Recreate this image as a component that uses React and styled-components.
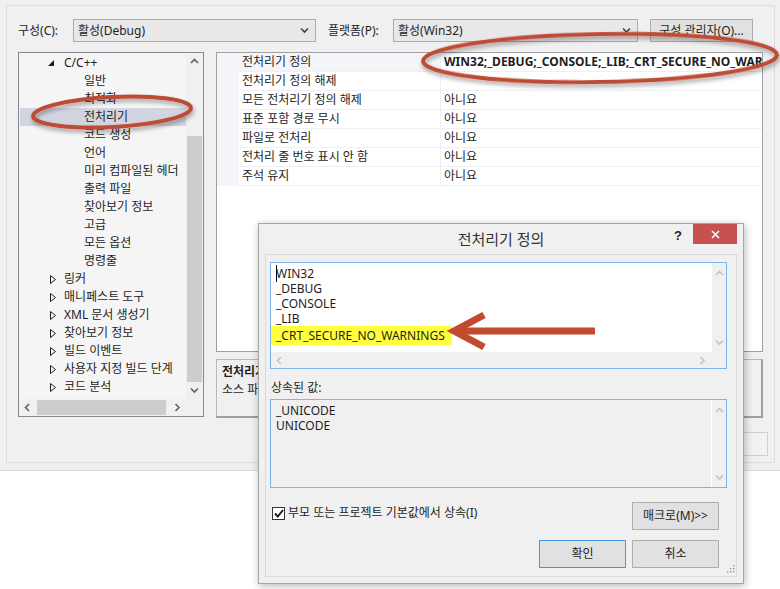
import React from 'react';
import styled, { createGlobalStyle } from 'styled-components';

const font = `"Noto Sans", "Noto Sans CJK KR", sans-serif`;

const GlobalStyle = createGlobalStyle`
  html, body {
    margin: 0;
    padding: 0;
    background: #ffffff;
  }
  body {
    font-family: ${font};
    font-size: 12px;
    color: #1e1e1e;
  }
  * {
    box-sizing: border-box;
  }
`;

const Screen = styled.div`
  position: relative;
  width: 780px;
  height: 589px;
  overflow: hidden;
  background: #ffffff;
`;

const MainWindow = styled.div`
  height: 471px;
  background: #f0f0f0;
  border-bottom: 1px solid #dcdcdc;
  padding: 5px 5px 0 6px;
`;

const Panel = styled.div`
  height: 458px;
  border: 1px solid #dcdcdc;
  padding: 13px 6px 0 11px;
  display: flex;
  flex-direction: column;
`;

const TopBar = styled.div`
  display: flex;
  align-items: center;
  height: 23px;
`;

const FieldLabel = styled.div`
  width: ${p => p.w}px;
  line-height: 16px;
  white-space: nowrap;
`;

const Combo = styled.div`
  width: ${p => p.w}px;
  height: 23px;
  margin-right: 12px;
  border: 1px solid #acacac;
  background: #e8e8e8;
  display: flex;
  align-items: center;
  justify-content: space-between;
  padding: 0 6px 0 4px;
  line-height: 16px;
`;

const Button = styled.div`
  width: ${p => p.w}px;
  height: ${p => p.h || 23}px;
  border: 1px solid ${p => (p.primary ? '#3c9ae8' : p.disabled ? '#d0d0d0' : '#adadad')};
  background: ${p => (p.disabled ? '#f2f2f2' : '#e1e1e1')};
  color: ${p => (p.disabled ? '#a0a0a0' : 'inherit')};
  display: flex;
  align-items: center;
  justify-content: center;
  line-height: 16px;
  white-space: nowrap;
`;

const Body = styled.div`
  display: flex;
  margin-top: 10px;
  height: 366px;
`;

const Tree = styled.div`
  width: 186px;
  height: 365px;
  border: 1px solid #828790;
  background: #f5f5f5;
  display: grid;
  grid-template-columns: 1fr 17px;
  grid-template-rows: 1fr 17px;
`;

const TreeList = styled.div`
  overflow: hidden;
  padding-top: 1px;
`;

const TreeRow = styled.div`
  height: 18px;
  display: flex;
  align-items: center;
  padding-left: ${p => (p.level === 2 ? 64 : 44)}px;
  position: relative;
  white-space: nowrap;
  background: ${p => (p.selected ? '#d2d4e0' : 'transparent')};
  margin-left: 1px;
  line-height: 16px;
`;

const Expander = styled.span`
  position: absolute;
  left: ${p => (p.open ? 28 : 30)}px;
  top: ${p => (p.open ? 6 : 5)}px;
  display: flex;
`;

const VScroll = styled.div`
  display: flex;
  flex-direction: column;
  background: ${p => p.bg || '#f0f0f0'};
  border-left: ${p => (p.split ? '1px solid #ffffff' : 'none')};
`;

const HScroll = styled.div`
  display: flex;
  align-items: stretch;
  background: ${p => p.bg || '#f0f0f0'};
`;

const ArrowCell = styled.div`
  flex: 0 0 ${p => p.size || 17}px;
  display: flex;
  align-items: center;
  justify-content: center;
`;

const Track = styled.div`
  flex: 1;
  display: flex;
  flex-direction: ${p => (p.horizontal ? 'row' : 'column')};
`;

const Thumb = styled.div`
  background: #cdcdcd;
  ${p =>
    p.horizontal
      ? `margin: 1px 0 1px ${p.start}px; width: ${p.len}px;`
      : `margin: ${p.start}px 1px 0 1px; flex: 1;`}
`;

const Corner = styled.div`
  background: #f0f0f0;
`;

const RightCol = styled.div`
  margin-left: 12px;
  width: 547px;
  display: flex;
  flex-direction: column;
`;

const PropGrid = styled.div`
  height: 300px;
  border: 1px solid #a0a0a0;
  background: #ffffff;
`;

const PropRow = styled.div`
  display: grid;
  grid-template-columns: 22px 202px 1fr;
  height: 19px;
`;

const Gutter = styled.div`
  background: #f3f5f9;
`;

const PropName = styled.div`
  padding-left: 3px;
  display: flex;
  align-items: center;
  border-bottom: 1px solid #eef0f4;
  border-right: 1px solid #eef0f4;
  background: ${p => (p.active ? '#f3f5f9' : '#ffffff')};
  white-space: nowrap;
  line-height: 16px;
`;

const PropValue = styled.div`
  padding-left: 3px;
  display: flex;
  align-items: center;
  border-bottom: 1px solid #eef0f4;
  white-space: nowrap;
  overflow: hidden;
  font-weight: ${p => (p.bold ? 700 : 400)};
  line-height: 16px;
`;

const DescBox = styled.div`
  margin-top: 7px;
  height: 59px;
  border: 1px solid #b9b9b9;
  border-right: 2px solid #a0a0a0;
  border-bottom: 2px solid #a0a0a0;
  padding: 3px 5px;
  line-height: 18px;
`;

const DescTitle = styled.div`
  font-weight: 700;
`;

const BottomButtons = styled.div`
  display: flex;
  justify-content: flex-end;
  gap: 7px;
  margin-top: 14px;
`;

/* dialog */

const Dialog = styled.div`
  position: absolute;
  left: 258px;
  top: 223px;
  width: 486px;
  height: 361px;
  background: #f0f0f0;
  border: 1px solid #a6a6a6;
  box-shadow: 1px 2px 8px rgba(0, 0, 0, 0.28);
  display: flex;
  flex-direction: column;
  padding: 0 6px 6px 6px;
`;

const TitleBar = styled.div`
  height: 30px;
  display: grid;
  grid-template-columns: 80px 1fr 80px;
`;

const TitleText = styled.div`
  font-size: 15px;
  line-height: 20px;
  padding-top: 5px;
  text-align: center;
  color: #333333;
  white-space: nowrap;
`;

const TitleControls = styled.div`
  display: flex;
  justify-content: flex-end;
  align-items: flex-start;
`;

const HelpMark = styled.div`
  font-family: "Liberation Sans", sans-serif;
  font-weight: 700;
  font-size: 13px;
  line-height: 16px;
  margin: 4px 11px 0 0;
  color: #222;
`;

const CloseBtn = styled.div`
  width: 44px;
  height: 20px;
  background: #c75050;
  color: #ffffff;
  display: flex;
  align-items: center;
  justify-content: center;
`;

const Client = styled.div`
  position: relative;
  flex: 1;
  border: 1px solid #dadada;
  padding: 7px 9px 0 4px;
  display: flex;
  flex-direction: column;
`;

const EditBox = styled.div`
  height: ${p => p.h}px;
  margin-top: ${p => p.mt || 0}px;
  border: 1px solid #7eb4ea;
  background: ${p => p.bg};
  display: grid;
  grid-template-columns: 1fr 15px;
  grid-template-rows: ${p => (p.hscroll ? '1fr 16px' : '1fr')};
`;

const EditText = styled.div`
  padding: 3px 0 0 5px;
  line-height: 15px;
  overflow: hidden;
`;

const Line = styled.div`
  white-space: nowrap;
`;

const Highlight = styled.span`
  display: inline-block;
  background: #ffff40;
  padding: 2px 7px 2px 5px;
  margin-left: -5px;
`;

const Caret = styled.span`
  border-left: 1px solid #000;
  margin-right: -1px;
`;

const SectionLabel = styled.div`
  margin-top: 11px;
  height: 16px;
  line-height: 16px;
  padding-left: 1px;
`;

const BottomArea = styled.div`
  display: flex;
  flex-direction: column;
  align-items: stretch;
  padding-right: 8px;
`;

const OptionRow = styled.div`
  display: flex;
  justify-content: space-between;
  align-items: center;
  margin-top: 14px;
`;

const CheckRow = styled.label`
  display: flex;
  align-items: center;
  gap: 3px;
  padding-left: 2px;
  margin-top: -6px;
  line-height: 16px;
`;

const CheckBox = styled.span`
  width: 13px;
  height: 13px;
  border: 1px solid #333333;
  background: #ffffff;
  display: flex;
  align-items: center;
  justify-content: center;
`;

const DialogButtons = styled.div`
  display: flex;
  justify-content: flex-end;
  gap: 6px;
  margin-top: 10px;
`;

const Grip = styled.svg`
  position: absolute;
  right: 1px;
  bottom: 1px;
`;

const Annotations = styled.svg`
  position: absolute;
  left: 0;
  top: 0;
  pointer-events: none;
`;

const Chevron = ({ dir = 'down', color = '#606060' }) => {
  const paths = {
    up: 'M1 5 L4.5 1.5 L8 5',
    down: 'M1 1.5 L4.5 5 L8 1.5',
    left: 'M5 1 L1.5 4.5 L5 8',
    right: 'M1.5 1 L5 4.5 L1.5 8',
  };
  const horiz = dir === 'left' || dir === 'right';
  return (
    <svg width={horiz ? 7 : 9} height={horiz ? 9 : 7} viewBox={horiz ? '0 0 7 9' : '0 0 9 7'}>
      <path d={paths[dir]} fill="none" stroke={color} strokeWidth="1.6" />
    </svg>
  );
};

const treeItems = [
  { label: 'C/C++', level: 1, open: true },
  { label: '일반', level: 2 },
  { label: '최적화', level: 2 },
  { label: '전처리기', level: 2, selected: true },
  { label: '코드 생성', level: 2 },
  { label: '언어', level: 2 },
  { label: '미리 컴파일된 헤더', level: 2 },
  { label: '출력 파일', level: 2 },
  { label: '찾아보기 정보', level: 2 },
  { label: '고급', level: 2 },
  { label: '모든 옵션', level: 2 },
  { label: '명령줄', level: 2 },
  { label: '링커', level: 1 },
  { label: '매니페스트 도구', level: 1 },
  { label: 'XML 문서 생성기', level: 1 },
  { label: '찾아보기 정보', level: 1 },
  { label: '빌드 이벤트', level: 1 },
  { label: '사용자 지정 빌드 단계', level: 1 },
  { label: '코드 분석', level: 1 },
];

const props = [
  { name: '전처리기 정의', value: 'WIN32;_DEBUG;_CONSOLE;_LIB;_CRT_SECURE_NO_WARNINGS', bold: true },
  { name: '전처리기 정의 해제', value: '' },
  { name: '모든 전처리기 정의 해제', value: '아니요' },
  { name: '표준 포함 경로 무시', value: '아니요' },
  { name: '파일로 전처리', value: '아니요' },
  { name: '전처리 줄 번호 표시 안 함', value: '아니요' },
  { name: '주석 유지', value: '아니요' },
];

const definitions = ['WIN32', '_DEBUG', '_CONSOLE', '_LIB'];

function App() {
  return (
    <Screen>
      <GlobalStyle />
      <MainWindow>
        <Panel>
          <TopBar>
            <FieldLabel w={55}>구성(C):</FieldLabel>
            <Combo w={243}>
              <span>활성(Debug)</span>
              <Chevron dir="down" color="#404040" />
            </Combo>
            <FieldLabel w={65}>플랫폼(P):</FieldLabel>
            <Combo w={245}>
              <span>활성(Win32)</span>
              <Chevron dir="down" color="#404040" />
            </Combo>
            <Button w={103}>구성 관리자(O)...</Button>
          </TopBar>

          <Body>
            <Tree>
              <TreeList>
                {treeItems.map((item, i) => (
                  <TreeRow key={i} level={item.level} selected={item.selected}>
                    {item.level === 1 && (
                      <Expander open={item.open}>
                        {item.open ? (
                          <svg width="6" height="6" viewBox="0 0 6 6">
                            <path d="M6 0 L6 6 L0 6 Z" fill="#1e1e1e" />
                          </svg>
                        ) : (
                          <svg width="6" height="9" viewBox="0 0 6 9">
                            <path d="M0.5 0.5 L5.5 4.5 L0.5 8.5 Z" fill="none" stroke="#1e1e1e" strokeWidth="1" />
                          </svg>
                        )}
                      </Expander>
                    )}
                    {item.label}
                  </TreeRow>
                ))}
              </TreeList>
              <VScroll>
                <ArrowCell>
                  <Chevron dir="up" />
                </ArrowCell>
                <Track>
                  <Thumb start={66} />
                </Track>
                <ArrowCell>
                  <Chevron dir="down" />
                </ArrowCell>
              </VScroll>
              <HScroll>
                <ArrowCell>
                  <Chevron dir="left" />
                </ArrowCell>
                <Track horizontal>
                  <Thumb horizontal start={1} len={129} />
                </Track>
                <ArrowCell>
                  <Chevron dir="right" />
                </ArrowCell>
              </HScroll>
              <Corner />
            </Tree>

            <RightCol>
              <PropGrid>
                {props.map((p, i) => (
                  <PropRow key={i}>
                    <Gutter />
                    <PropName active={i === 0}>{p.name}</PropName>
                    <PropValue bold={p.bold}>{p.value}</PropValue>
                  </PropRow>
                ))}
              </PropGrid>
              <DescBox>
                <DescTitle>전처리기 정의</DescTitle>
                <div>소스 파일의 전처리 기호를 정의합니다.</div>
              </DescBox>
            </RightCol>
          </Body>

          <BottomButtons>
            <Button w={75} h={24}>확인</Button>
            <Button w={75} h={24}>취소</Button>
            <Button w={90} h={24} disabled>적용(A)</Button>
          </BottomButtons>
        </Panel>
      </MainWindow>

      <Dialog>
        <TitleBar>
          <div />
          <TitleText>전처리기 정의</TitleText>
          <TitleControls>
            <HelpMark>?</HelpMark>
            <CloseBtn>
              <svg width="9" height="9" viewBox="0 0 9 9">
                <path d="M1 1 L8 8 M8 1 L1 8" stroke="#ffffff" strokeWidth="1.6" />
              </svg>
            </CloseBtn>
          </TitleControls>
        </TitleBar>

        <Client>
          <EditBox h={107} bg="#ffffff" hscroll>
            <EditText>
              {definitions.map((d, i) => (
                <Line key={d}>
                  {i === 0 && <Caret />}
                  {d}
                </Line>
              ))}
              <Line>
                <Highlight>_CRT_SECURE_NO_WARNINGS</Highlight>
              </Line>
            </EditText>
            <VScroll split>
              <ArrowCell size={20}>
                <Chevron dir="up" color="#c2c2c2" />
              </ArrowCell>
              <Track />
              <ArrowCell size={20}>
                <Chevron dir="down" color="#c2c2c2" />
              </ArrowCell>
            </VScroll>
            <HScroll>
              <ArrowCell>
                <Chevron dir="left" color="#c2c2c2" />
              </ArrowCell>
              <Track horizontal />
              <ArrowCell>
                <Chevron dir="right" color="#c2c2c2" />
              </ArrowCell>
            </HScroll>
            <Corner />
          </EditBox>

          <SectionLabel>상속된 값:</SectionLabel>

          <EditBox h={89} mt={3} bg="#f0f0f0">
            <EditText>
              <Line>_UNICODE</Line>
              <Line>UNICODE</Line>
            </EditText>
            <VScroll split>
              <ArrowCell size={20}>
                <Chevron dir="up" color="#c2c2c2" />
              </ArrowCell>
              <Track />
              <ArrowCell size={20}>
                <Chevron dir="down" color="#c2c2c2" />
              </ArrowCell>
            </VScroll>
          </EditBox>

          <BottomArea>
            <OptionRow>
              <CheckRow>
                <CheckBox>
                  <svg width="10" height="9" viewBox="0 0 10 9">
                    <path d="M1 4.5 L3.8 7.5 L9 1" fill="none" stroke="#1e1e1e" strokeWidth="2" />
                  </svg>
                </CheckBox>
                부모 또는 프로젝트 기본값에서 상속(I)
              </CheckRow>
              <Button w={87} h={28}>매크로(M)&gt;&gt;</Button>
            </OptionRow>
            <DialogButtons>
              <Button w={87} h={28} primary>확인</Button>
              <Button w={87} h={28}>취소</Button>
            </DialogButtons>
          </BottomArea>

          <Grip width="10" height="10" viewBox="0 0 10 10">
            <g fill="#9a9a9a">
              <rect x="8" y="0" width="1.4" height="1.4" />
              <rect x="5" y="3" width="1.4" height="1.4" />
              <rect x="8" y="3" width="1.4" height="1.4" />
              <rect x="2" y="6" width="1.4" height="1.4" />
              <rect x="5" y="6" width="1.4" height="1.4" />
              <rect x="8" y="6" width="1.4" height="1.4" />
            </g>
          </Grip>
        </Client>
      </Dialog>

      <Annotations width="780" height="589" viewBox="0 0 780 589">
        <defs>
          <filter id="shadow" x="-10%" y="-30%" width="120%" height="180%">
            <feDropShadow dx="1" dy="3" stdDeviation="2" floodColor="#000" floodOpacity="0.35" />
          </filter>
        </defs>
        <g filter="url(#shadow)" fill="none" stroke="#bd4b36" strokeWidth="4">
          <ellipse cx="112" cy="112" rx="79" ry="15" transform="rotate(-3 112 112)" />
          <ellipse cx="600" cy="58" rx="177" ry="24" transform="rotate(-1 600 58)" />
        </g>
        <g fill="none" stroke="#c24a2f" strokeWidth="7">
          <path d="M456 331 L595 331" />
          <path d="M484 315 L454 331 L484 347" strokeLinejoin="miter" />
        </g>
      </Annotations>
    </Screen>
  );
}

export default App;
